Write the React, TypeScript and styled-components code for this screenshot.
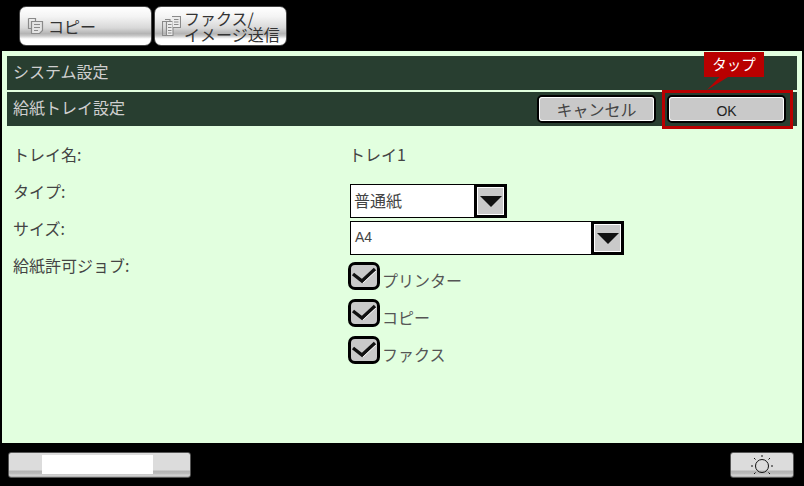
import * as React from 'react';
import styled, { createGlobalStyle } from 'styled-components';

const GlobalStyle = createGlobalStyle`
    html, body {
        margin: 0;
        padding: 0;
        background: #000;
    }
    body {
        font-family: "Noto Sans CJK JP", "Liberation Sans", sans-serif;
        font-size: 16px;
    }
`;

const Screen = styled.div`
    position: relative;
    width: 804px;
    height: 486px;
    background: #000;
    overflow: hidden;
`;

const TabBar = styled.div`
    display: flex;
    gap: 2px;
    height: 51px;
    padding: 6px 0 0 19px;
    box-sizing: border-box;
`;

const Tab = styled.button`
    display: flex;
    align-items: center;
    gap: 3px;
    width: 133px;
    height: 40px;
    padding: 0 0 0 7px;
    border: 1px solid #444;
    border-radius: 7px;
    background: linear-gradient(#fff 0%, #f4f4f4 25%, #d8d8d8 55%, #b4b4b4 70%, #c8c8c8 76%, #fff 84%);
    color: #333;
    font: inherit;
    line-height: 16px;
    text-align: left;
    white-space: nowrap;
    box-sizing: border-box;
`;

const Panel = styled.main`
    width: 800px;
    height: 392px;
    margin-left: 2px;
    padding: 5px;
    box-sizing: border-box;
    background: #e2ffdf;
`;

const Bar = styled.div`
    display: flex;
    align-items: center;
    justify-content: space-between;
    height: 34px;
    margin-bottom: 2px;
    padding: 0 11px 0 6px;
    box-sizing: border-box;
    background: #283e30;
    color: #cfcfcf;
`;

const BarTitle = styled.span`
    margin-top: -4px;
`;

const BarActions = styled.div`
    display: flex;
    gap: 11px;
`;

const ActionButton = styled.button`
    width: 119px;
    height: 28px;
    padding: 0;
    border: 2px solid #000;
    border-radius: 5px;
    outline: 1px solid #fff;
    outline-offset: -3px;
    background: #c9c9c9;
    color: #444;
    font: inherit;
`;

const OkLabel = styled.span`
    font-family: "Liberation Sans", sans-serif;
    font-size: 14px;
    color: #222;
`;

const Form = styled.div`
    display: grid;
    grid-template-columns: 336px 1fr;
    grid-template-rows: 53px 37px 37px auto;
    padding-left: 6px;
    color: #444;
`;

const Label = styled.div<{ $top?: number }>`
    padding-top: ${({ $top }) => $top ?? 0}px;
    line-height: 20px;
`;

const Value = styled.div`
    padding-top: 16px;
    line-height: 20px;
`;

const Select = styled.div<{ $width: number }>`
    display: flex;
    align-self: end;
    width: ${({ $width }) => $width}px;
    height: 34px;
    margin-left: 1px;
    box-sizing: border-box;
    border: 1px solid #000;
    background: #fff;
`;

const SelectText = styled.span<{ $latin?: boolean }>`
    flex: 1;
    padding-left: ${({ $latin }) => ($latin ? '4px' : '3px')};
    line-height: 30px;
    color: #444;
    font-family: ${({ $latin }) => ($latin ? '"Liberation Sans", sans-serif' : 'inherit')};
    font-size: ${({ $latin }) => ($latin ? '14px' : '16px')};
`;

const SelectArrow = styled.span`
    display: flex;
    align-items: center;
    justify-content: center;
    width: 33px;
    margin: -1px -1px -1px 0;
    box-sizing: border-box;
    border: 3px solid #000;
    outline: 1px solid #fff;
    outline-offset: -4px;
    background: #c9c9c9;
    &::after {
        content: '';
        border-left: 11px solid transparent;
        border-right: 11px solid transparent;
        border-top: 11px solid #111;
    }
`;

const CheckList = styled.div`
    display: flex;
    flex-direction: column;
    gap: 9px;
    margin-left: -1px;
    padding-top: 7px;
`;

const CheckRow = styled.label`
    display: flex;
    align-items: flex-end;
    gap: 2px;
    height: 28px;
    color: #555;
    line-height: 20px;
`;

const CheckBox = styled.span`
    display: flex;
    align-items: center;
    justify-content: center;
    width: 32px;
    height: 28px;
    box-sizing: border-box;
    border: 3px solid #000;
    border-radius: 7px;
    background: #c9c9c9;
`;

const Footer = styled.footer`
    display: flex;
    align-items: flex-end;
    justify-content: space-between;
    height: 43px;
    padding: 0 10px 8px 8px;
    box-sizing: border-box;
`;

const FooterButton = styled.div<{ $width: number }>`
    display: flex;
    align-items: flex-start;
    justify-content: center;
    width: ${({ $width }) => $width}px;
    height: 26px;
    box-sizing: border-box;
    padding-top: 2px;
    border: 1px solid #555;
    border-radius: 3px;
    background: linear-gradient(#dcdcdc 0%, #dcdcdc 70%, #b4b4b4 76%, #bebebe 88%, #dcdcdc 92%, #aaa 100%);
`;

const ProgressFill = styled.div`
    width: 111px;
    height: 19px;
    margin-right: 4px;
    background: #fff;
`;

const Highlight = styled.div`
    position: absolute;
    left: 662px;
    top: 90px;
    width: 131px;
    height: 39px;
    box-sizing: border-box;
    border: 3px solid #b90000;
`;

const Callout = styled.div`
    position: absolute;
    left: 704px;
    top: 52px;
    width: 60px;
    height: 25px;
    background: #b90000;
    color: #fff;
    font-size: 14.5px;
    line-height: 23px;
    text-align: center;
    &::after {
        content: '';
        position: absolute;
        left: 3px;
        top: 25px;
        width: 21px;
        height: 13px;
        background: #b90000;
        clip-path: polygon(100% 0, 60% 0, 0 100%);
    }
`;

const CopyIcon = () => (
    <svg width="18" height="20" viewBox="0 0 18 20" fill="none" stroke="#8a8a8a" strokeWidth="1.2">
        <path d="M1.5 2.5h7v3M1.5 2.5v10h3" />
        <path d="M4.5 5.5h11v9l-3 3h-8z" fill="#e4e4e4" />
        <path d="M7 8.5h6M7 11.5h6M7 14.5h4" />
    </svg>
);

const FaxIcon = () => (
    <svg width="19" height="22" viewBox="0 0 19 22" fill="none" stroke="#8a8a8a" strokeWidth="1.1">
        <path d="M.5 6.5h4v14h-4zM3 4.5h5v2" />
        <path d="M4.5 6.5h6.5v14H4.5z" fill="#ececec" />
        <path d="M10 1.5h8.5v11H11" fill="#ececec" />
        <path d="M6 9.5h3.5M6 12.5h3.5M6 15.5h3.5M6 18h3.5M12 4.5h4.5M12 7h4.5M12 9.5h4.5" />
    </svg>
);

const CheckMark = () => (
    <svg width="26" height="22" viewBox="0 0 26 22" fill="none">
        <path d="M2 9l9 7L24 4" stroke="#111" strokeWidth="3.4" />
        <path d="M12 18L25 6" stroke="#f4f4f4" strokeWidth="1" />
    </svg>
);

const SunIcon = () => (
    <svg width="22" height="22" viewBox="0 0 22 22" fill="none" stroke="#111" strokeWidth="1">
        <circle cx="11" cy="11" r="6.5" />
        <path d="M11 0v2M0 11h2M20 11h2M3 3l1.5 1.5M19 3l-1.5 1.5M3 19l1.5-1.5M19 19l-1.5-1.5" />
    </svg>
);

const jobs = ['プリンター', 'コピー', 'ファクス'];

export default function App() {
    return (
        <Screen>
            <GlobalStyle />
            <TabBar>
                <Tab>
                    <CopyIcon />
                    コピー
                </Tab>
                <Tab>
                    <FaxIcon />
                    <span>
                        ファクス/
                        <br />
                        イメージ送信
                    </span>
                </Tab>
            </TabBar>
            <Panel>
                <Bar>
                    <BarTitle>システム設定</BarTitle>
                </Bar>
                <Bar>
                    <BarTitle>給紙トレイ設定</BarTitle>
                    <BarActions>
                        <ActionButton>キャンセル</ActionButton>
                        <ActionButton>
                            <OkLabel>OK</OkLabel>
                        </ActionButton>
                    </BarActions>
                </Bar>
                <Form>
                    <Label $top={16}>トレイ名:</Label>
                    <Value>トレイ1</Value>
                    <Label>タイプ:</Label>
                    <Select $width={157}>
                        <SelectText>普通紙</SelectText>
                        <SelectArrow />
                    </Select>
                    <Label>サイズ:</Label>
                    <Select $width={274}>
                        <SelectText $latin>A4</SelectText>
                        <SelectArrow />
                    </Select>
                    <Label>給紙許可ジョブ:</Label>
                    <CheckList>
                        {jobs.map(job => (
                            <CheckRow key={job}>
                                <CheckBox>
                                    <CheckMark />
                                </CheckBox>
                                <span>{job}</span>
                            </CheckRow>
                        ))}
                    </CheckList>
                </Form>
            </Panel>
            <Footer>
                <FooterButton $width={183}>
                    <ProgressFill />
                </FooterButton>
                <FooterButton $width={64}>
                    <SunIcon />
                </FooterButton>
            </Footer>
            <Highlight />
            <Callout>タップ</Callout>
        </Screen>
    );
}
